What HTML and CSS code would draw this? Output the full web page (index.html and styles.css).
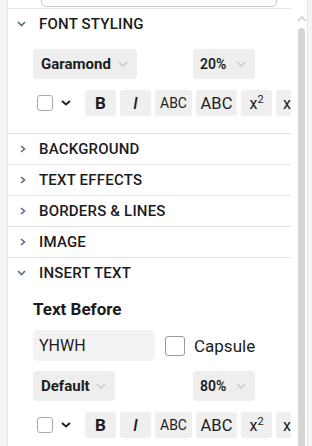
FILE: index.html
```html
<!DOCTYPE html>
<html lang="en">
<head>
    <meta charset="UTF-8">
    <meta name="viewport" content="width=device-width, initial-scale=1.0">
    <title>Text Settings</title>
    <link rel="stylesheet" href="styles.css">
</head>
<body>
    <div class="panel">
        <div class="content">
            <!-- search box, scrolled mostly out of view -->
            <div class="top">
                <div class="search"></div>
            </div>

            <section class="group">
                <div class="group-head">
                    <svg class="chev-down" width="9" height="6" viewBox="0 0 9 6"><path d="M1 1l3.5 3.5L8 1" fill="none" stroke="#5b6a80" stroke-width="1.6"/></svg>
                    FONT STYLING
                </div>
                <div class="group-body">
                    <div class="selects">
                        <div class="select select-font">Garamond
                            <svg width="10" height="6" viewBox="0 0 10 6"><path d="M1 1l4 4 4-4" fill="none" stroke="#c8ccd4" stroke-width="1.6"/></svg>
                        </div>
                        <div class="select select-size">20%
                            <svg width="10" height="6" viewBox="0 0 10 6"><path d="M1 1l4 4 4-4" fill="none" stroke="#c8ccd4" stroke-width="1.6"/></svg>
                        </div>
                    </div>
                    <div class="toolbar">
                        <span class="check small"></span>
                        <svg class="drop" width="10" height="6" viewBox="0 0 10 6"><path d="M1 1l4 3.5L9 1" fill="none" stroke="#222" stroke-width="2"/></svg>
                        <button class="tb tb-bold">B</button>
                        <button class="tb tb-italic">I</button>
                        <button class="tb tb-caps-sm">ABC</button>
                        <button class="tb tb-caps">ABC</button>
                        <button class="tb tb-sup">x<sup>2</sup></button>
                        <button class="tb tb-sub">x</button>
                    </div>
                </div>
            </section>

            <section class="group closed">
                <div class="group-head">
                    <svg class="chev-right" width="6" height="8" viewBox="0 0 6 8"><path d="M1 1l3.5 3L1 7" fill="none" stroke="#5b6a80" stroke-width="1.6"/></svg>
                    BACKGROUND
                </div>
            </section>
            <section class="group closed">
                <div class="group-head">
                    <svg class="chev-right" width="6" height="8" viewBox="0 0 6 8"><path d="M1 1l3.5 3L1 7" fill="none" stroke="#5b6a80" stroke-width="1.6"/></svg>
                    TEXT EFFECTS
                </div>
            </section>
            <section class="group closed">
                <div class="group-head">
                    <svg class="chev-right" width="6" height="8" viewBox="0 0 6 8"><path d="M1 1l3.5 3L1 7" fill="none" stroke="#5b6a80" stroke-width="1.6"/></svg>
                    BORDERS &amp; LINES
                </div>
            </section>
            <section class="group closed">
                <div class="group-head">
                    <svg class="chev-right" width="6" height="8" viewBox="0 0 6 8"><path d="M1 1l3.5 3L1 7" fill="none" stroke="#5b6a80" stroke-width="1.6"/></svg>
                    IMAGE
                </div>
            </section>

            <section class="group last">
                <div class="group-head">
                    <svg class="chev-down" width="9" height="6" viewBox="0 0 9 6"><path d="M1 1l3.5 3.5L8 1" fill="none" stroke="#5b6a80" stroke-width="1.6"/></svg>
                    INSERT TEXT
                </div>
                <div class="group-body">
                    <div class="label">Text Before</div>
                    <div class="input-row">
                        <div class="text-input">YHWH</div>
                        <span class="check"></span>
                        <span class="check-label">Capsule</span>
                    </div>
                    <div class="selects">
                        <div class="select select-default">Default
                            <svg width="10" height="6" viewBox="0 0 10 6"><path d="M1 1l4 4 4-4" fill="none" stroke="#c8ccd4" stroke-width="1.6"/></svg>
                        </div>
                        <div class="select select-size">80%
                            <svg width="10" height="6" viewBox="0 0 10 6"><path d="M1 1l4 4 4-4" fill="none" stroke="#c8ccd4" stroke-width="1.6"/></svg>
                        </div>
                    </div>
                    <div class="toolbar">
                        <span class="check small"></span>
                        <svg class="drop" width="10" height="6" viewBox="0 0 10 6"><path d="M1 1l4 3.5L9 1" fill="none" stroke="#222" stroke-width="2"/></svg>
                        <button class="tb tb-bold">B</button>
                        <button class="tb tb-italic">I</button>
                        <button class="tb tb-caps-sm">ABC</button>
                        <button class="tb tb-caps">ABC</button>
                        <button class="tb tb-sup">x<sup>2</sup></button>
                        <button class="tb tb-sub">x</button>
                    </div>
                </div>
            </section>
        </div>

        <!-- scrollbar -->
        <div class="scrollbar">
            <svg class="scroll-up" width="10" height="6" viewBox="0 0 10 6"><path d="M1 5l4-4 4 4" fill="none" stroke="#cfcfcf" stroke-width="1.6"/></svg>
            <div class="thumb"></div>
        </div>
    </div>
</body>
</html>
```

FILE: styles.css
```css
/* Page */
body {
    margin: 0;
    background: #f4f4f4;
    font-family: Roboto, "Noto Sans", sans-serif;
    color: #1c1c1c;
}

.panel {
    display: flex;
    margin-left: 7px;
    width: 301px;
    height: 446px;
    box-sizing: border-box;
    background: white;
    border-left: 1px solid #e6e6e6;
    border-right: 1px solid #e6e6e6;
    overflow: hidden;
}

.content {
    width: 283px;
    flex-shrink: 0;
    overflow: hidden;
}

/* Search box cut off at the top */
.top {
    height: 8px;
    border-bottom: 1px solid #e6e6e6;
    overflow: hidden;
}

.search {
    margin: -14px 0 0 33px;
    width: 236px;
    height: 21px;
    box-sizing: border-box;
    border: 1px solid #c6c6c6;
    border-radius: 0 0 5px 5px;
}

/* Accordion groups */
.group {
    border-bottom: 1px solid #e3e3e3;
}

.group.last {
    border-bottom: none;
}

.group-head {
    display: flex;
    align-items: center;
    height: 30px;
    font-size: 15px;
    font-weight: 500;
    letter-spacing: 0.2px;
}

.chev-down {
    margin: 0 13px 0 9px;
}

.chev-right {
    margin: 0 13px 0 12px;
}

.group-body {
    padding: 0 0 17px 25px;
}

.group.last .group-body {
    padding-bottom: 0;
}

/* Dropdowns */
.selects {
    display: grid;
    grid-template-columns: 160px auto;
    margin-top: 10px;
}

.select {
    display: inline-flex;
    align-items: center;
    justify-content: space-between;
    height: 30px;
    box-sizing: border-box;
    padding: 0 9px 0 8px;
    background: #eeeeee;
    border-radius: 4px;
    font-size: 15px;
    font-weight: 700;
}

.select-font {
    width: 104px;
}

.select-default {
    width: 82px;
}

.select-size {
    width: 62px;
    padding-left: 7px;
    font-weight: 600;
    font-size: 14px;
}

/* Format toolbar */
.toolbar {
    display: flex;
    align-items: center;
    gap: 4px;
    margin-top: 11px;
    height: 26px;
}

.toolbar > * {
    flex-shrink: 0;
}

.check {
    display: inline-block;
    flex-shrink: 0;
    width: 20px;
    height: 20px;
    box-sizing: border-box;
    border: 1px solid #9a9a9a;
    border-radius: 3px;
    background: white;
}

.check.small {
    width: 16px;
    height: 16px;
    margin-left: 4px;
    border-color: #aaa;
}

.drop {
    margin: 0 10px 0 4px;
}

.tb {
    height: 26px;
    width: 31px;
    padding: 0;
    border: none;
    border-radius: 3px;
    background: #efefef;
    font-family: Roboto, "Noto Sans", sans-serif;
    color: #1c1c1c;
    font-size: 16px;
}

.tb-bold {
    font-weight: 700;
    font-size: 17px;
}

.tb-italic {
    font-style: italic;
    font-weight: 500;
}

.tb-caps-sm {
    width: 37px;
    font-size: 14px;
}

.tb-caps {
    width: 41px;
    font-size: 16.5px;
}

.tb-sup sup {
    font-size: 11px;
    vertical-align: 6px;
    line-height: 0;
}

.tb-sub {
    text-align: left;
    padding-left: 7px;
}

/* Insert text fields */
.label {
    margin-top: 11px;
    font-size: 17px;
    font-weight: 700;
    line-height: 20px;
}

.input-row {
    display: flex;
    align-items: center;
    margin-top: 11px;
}

.text-input {
    width: 122px;
    height: 31px;
    box-sizing: border-box;
    padding-left: 6px;
    line-height: 31px;
    background: #f3f3f3;
    border-radius: 5px;
    font-size: 16px;
}

.input-row .check {
    margin-left: 10px;
}

.check-label {
    margin-left: 9px;
    font-size: 17px;
}

/* Fake scrollbar */
.scrollbar {
    display: flex;
    flex-direction: column;
    align-items: flex-start;
    padding-left: 6px;
    flex: 1;
}

.scroll-up {
    margin-top: 16px;
}

.thumb {
    margin: 6px 0 0 1px;
    width: 7px;
    flex: 1;
    background: #d5d5d5;
    border-radius: 4px 4px 0 0;
}
```
